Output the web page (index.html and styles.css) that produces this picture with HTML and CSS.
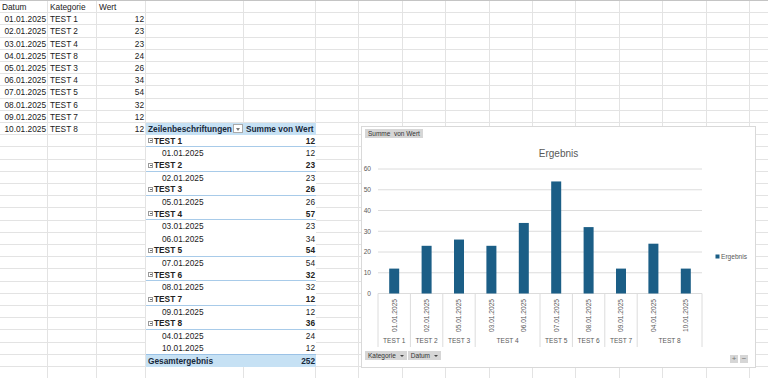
FILE: index.html
```html
<!DOCTYPE html>
<html lang="de">
<head>
  <meta charset="UTF-8" />
  <title>Mappe1</title>
  <link rel="stylesheet" href="styles.css">
</head>
<body>

  <div class="sheet">

    <!-- Rohdaten -->
    <div class="data">
      <span>Datum</span><span>Kategorie</span><span>Wert</span>
      <span class="n">01.01.2025</span><span>TEST 1</span><span class="n">12</span>
      <span class="n">02.01.2025</span><span>TEST 2</span><span class="n">23</span>
      <span class="n">03.01.2025</span><span>TEST 4</span><span class="n">23</span>
      <span class="n">04.01.2025</span><span>TEST 8</span><span class="n">24</span>
      <span class="n">05.01.2025</span><span>TEST 3</span><span class="n">26</span>
      <span class="n">06.01.2025</span><span>TEST 4</span><span class="n">34</span>
      <span class="n">07.01.2025</span><span>TEST 5</span><span class="n">54</span>
      <span class="n">08.01.2025</span><span>TEST 6</span><span class="n">32</span>
      <span class="n">09.01.2025</span><span>TEST 7</span><span class="n">12</span>
      <span class="n">10.01.2025</span><span>TEST 8</span><span class="n">12</span>
    </div>

    <!-- Pivot-Tabelle -->
    <div class="pivot">
      <div class="prow head"><span class="label">Zeilenbeschriftungen <i class="filter"></i></span><span>Summe von Wert</span></div>
      <div class="prow group"><span class="label"><i class="collapse"></i>TEST 1</span><span class="n">12</span></div>
      <div class="prow item"><span class="label">01.01.2025</span><span class="n">12</span></div>
      <div class="prow group"><span class="label"><i class="collapse"></i>TEST 2</span><span class="n">23</span></div>
      <div class="prow item"><span class="label">02.01.2025</span><span class="n">23</span></div>
      <div class="prow group"><span class="label"><i class="collapse"></i>TEST 3</span><span class="n">26</span></div>
      <div class="prow item"><span class="label">05.01.2025</span><span class="n">26</span></div>
      <div class="prow group"><span class="label"><i class="collapse"></i>TEST 4</span><span class="n">57</span></div>
      <div class="prow item"><span class="label">03.01.2025</span><span class="n">23</span></div>
      <div class="prow item"><span class="label">06.01.2025</span><span class="n">34</span></div>
      <div class="prow group"><span class="label"><i class="collapse"></i>TEST 5</span><span class="n">54</span></div>
      <div class="prow item"><span class="label">07.01.2025</span><span class="n">54</span></div>
      <div class="prow group"><span class="label"><i class="collapse"></i>TEST 6</span><span class="n">32</span></div>
      <div class="prow item"><span class="label">08.01.2025</span><span class="n">32</span></div>
      <div class="prow group"><span class="label"><i class="collapse"></i>TEST 7</span><span class="n">12</span></div>
      <div class="prow item"><span class="label">09.01.2025</span><span class="n">12</span></div>
      <div class="prow group"><span class="label"><i class="collapse"></i>TEST 8</span><span class="n">36</span></div>
      <div class="prow item"><span class="label">04.01.2025</span><span class="n">24</span></div>
      <div class="prow item"><span class="label">10.01.2025</span><span class="n">12</span></div>
      <div class="prow total"><span class="label">Gesamtergebnis</span><span class="n">252</span></div>
    </div>

    <!-- Pivot-Diagramm -->
    <div class="chart">
      <div class="chart-top">
        <span class="field">Summe &nbsp;von Wert</span>
      </div>

      <svg class="plot" width="393" height="211" viewBox="0 0 393 211">
        <text class="title" x="196.5" y="17.5" text-anchor="middle">Ergebnis</text>

        <g class="gridlines">
          <line x1="16" x2="340" y1="30" y2="30"/>
          <line x1="16" x2="340" y1="50.75" y2="50.75"/>
          <line x1="16" x2="340" y1="71.5" y2="71.5"/>
          <line x1="16" x2="340" y1="92.25" y2="92.25"/>
          <line x1="16" x2="340" y1="113" y2="113"/>
          <line x1="16" x2="340" y1="133.75" y2="133.75"/>
          <line x1="16" x2="340" y1="154.5" y2="154.5"/>
        </g>

        <g class="ylabels" text-anchor="end">
          <text x="9" y="32.3">60</text>
          <text x="9" y="53">50</text>
          <text x="9" y="73.8">40</text>
          <text x="9" y="94.5">30</text>
          <text x="9" y="115.3">20</text>
          <text x="9" y="136">10</text>
          <text x="9" y="156.8">0</text>
        </g>

        <g class="bars">
          <rect x="27.2" y="129.6" width="10" height="24.9"/>
          <rect x="59.6" y="106.8" width="10" height="47.7"/>
          <rect x="92" y="100.55" width="10" height="53.95"/>
          <rect x="124.4" y="106.8" width="10" height="47.7"/>
          <rect x="156.8" y="83.95" width="10" height="70.55"/>
          <rect x="189.2" y="42.45" width="10" height="112.05"/>
          <rect x="221.6" y="88.1" width="10" height="66.4"/>
          <rect x="254" y="129.6" width="10" height="24.9"/>
          <rect x="286.4" y="104.7" width="10" height="49.8"/>
          <rect x="318.8" y="129.6" width="10" height="24.9"/>
        </g>

        <g class="ticks">
          <line x1="16" x2="16" y1="154.5" y2="208"/>
          <line x1="48.4" x2="48.4" y1="154.5" y2="208"/>
          <line x1="80.8" x2="80.8" y1="154.5" y2="208"/>
          <line x1="113.2" x2="113.2" y1="154.5" y2="208"/>
          <line x1="178" x2="178" y1="154.5" y2="208"/>
          <line x1="210.4" x2="210.4" y1="154.5" y2="208"/>
          <line x1="242.8" x2="242.8" y1="154.5" y2="208"/>
          <line x1="275.2" x2="275.2" y1="154.5" y2="208"/>
          <line x1="340" x2="340" y1="154.5" y2="208"/>
        </g>

        <g class="xlabels" text-anchor="end">
          <text transform="translate(34.6 160) rotate(-90)">01.01.2025</text>
          <text transform="translate(67 160) rotate(-90)">02.01.2025</text>
          <text transform="translate(99.4 160) rotate(-90)">05.01.2025</text>
          <text transform="translate(131.8 160) rotate(-90)">03.01.2025</text>
          <text transform="translate(164.2 160) rotate(-90)">06.01.2025</text>
          <text transform="translate(196.6 160) rotate(-90)">07.01.2025</text>
          <text transform="translate(229 160) rotate(-90)">08.01.2025</text>
          <text transform="translate(261.4 160) rotate(-90)">09.01.2025</text>
          <text transform="translate(293.8 160) rotate(-90)">04.01.2025</text>
          <text transform="translate(326.2 160) rotate(-90)">10.01.2025</text>
        </g>

        <g class="xgroups" text-anchor="middle">
          <text x="32.2" y="203.5">TEST 1</text>
          <text x="64.6" y="203.5">TEST 2</text>
          <text x="97" y="203.5">TEST 3</text>
          <text x="145.6" y="203.5">TEST 4</text>
          <text x="194.2" y="203.5">TEST 5</text>
          <text x="226.6" y="203.5">TEST 6</text>
          <text x="259" y="203.5">TEST 7</text>
          <text x="307.6" y="203.5">TEST 8</text>
        </g>

        <rect class="key" x="353.5" y="115.5" width="4" height="4"/>
        <text class="legend" x="359" y="119.6">Ergebnis</text>
      </svg>

      <div class="chart-bottom">
        <div class="fields">
          <span class="field drop">Kategorie</span>
          <span class="field drop">Datum</span>
        </div>
        <div class="zoom">
          <span>+</span><span>&minus;</span>
        </div>
      </div>
    </div>

  </div>

</body>
</html>
```

FILE: styles.css
```css
* { box-sizing: border-box; margin: 0; padding: 0; }

body {
  font-family: "Liberation Sans", Arial, sans-serif;
  font-size: 8.3px;
  color: #1a1a1a;
  background: #fff;
  width: 768px;
  height: 378px;
  overflow: hidden;
}

/* Tabellenblatt mit Gitternetz */
.sheet {
  position: relative;
  display: grid;
  grid-template-columns: 48px 49px 49px 98px 72px repeat(11, 43.4px);
  grid-template-rows: repeat(31, 12.2px);
  border-top: 1px solid #c4c4c4;
  background-image:
    repeating-linear-gradient(to bottom, transparent 0 11.2px, #e3e3e3 11.2px 12.2px),
    linear-gradient(to right,
      transparent 0 47px, #e3e3e3 47px 48px,
      transparent 48px 96px, #e3e3e3 96px 97px,
      transparent 97px 145px, #e3e3e3 145px 146px,
      transparent 146px 243px, #e3e3e3 243px 244px,
      transparent 244px 315px, #e3e3e3 315px 316px,
      transparent 316px),
    repeating-linear-gradient(to right, transparent 0 42.4px, #e3e3e3 42.4px 43.4px);
  background-position: 0 0, 0 0, 316px 0;
  background-size: 100% 100%;
  background-repeat: no-repeat;
}

.data {
  grid-column: 1 / 4;
  grid-row: 1 / 12;
  display: grid;
  grid-template-columns: 48px 49px 49px;
  grid-auto-rows: 12.2px;
}

.data span {
  padding: 0 2px;
  line-height: 13px;
  white-space: nowrap;
}

.data .n { text-align: right; }

/* Pivot */
.pivot {
  grid-column: 4 / 6;
  grid-row: 11 / 31;
  display: grid;
  grid-auto-rows: 12.2px;
}

.prow {
  display: grid;
  grid-template-columns: 98px 72px;
  align-items: center;
  background: #fff;
  color: #222;
}

.prow span {
  padding: 0 1px 0 2px;
  white-space: nowrap;
}

.prow .n { text-align: right; }

.head, .total {
  background: #c6e1f4;
  font-weight: bold;
  color: #17283a;
}

.head .label {
  display: flex;
  align-items: center;
  justify-content: space-between;
}

.filter {
  position: relative;
  width: 10px;
  height: 9px;
  border: 1px solid #a9a9a9;
  background: #fff;
}

.filter::after {
  content: "";
  position: absolute;
  left: 2px;
  top: 2.5px;
  border-left: 2.5px solid transparent;
  border-right: 2.5px solid transparent;
  border-top: 3px solid #7a7a7a;
}

.group {
  font-weight: bold;
  border-bottom: 1px solid #a8cbe9;
}

.group .label {
  display: flex;
  align-items: center;
  gap: 1px;
}

.collapse {
  position: relative;
  width: 5px;
  height: 5px;
  border: 1px solid #9a9a9a;
}

.collapse::after {
  content: "";
  position: absolute;
  left: 0.5px;
  right: 0.5px;
  top: 1px;
  border-top: 1px solid #666;
}

.item .label { padding-left: 16px; }

.total { border-top: 1px solid #9bc2e6; }

/* Diagramm */
.chart {
  position: absolute;
  left: 361px;
  top: 125px;
  width: 395px;
  height: 242px;
  background: #fff;
  border: 1px solid #d9d9d9;
  display: flex;
  flex-direction: column;
}

.chart-top {
  height: 12px;
  padding: 2px 0 0 3px;
  display: flex;
}

.field {
  display: inline-flex;
  align-items: center;
  height: 9px;
  padding: 0 3px;
  background: #d6d6d6;
  color: #333;
  font-size: 6.5px;
  white-space: nowrap;
}

.field.drop::after {
  content: "";
  margin-left: 4px;
  border-left: 2px solid transparent;
  border-right: 2px solid transparent;
  border-top: 2.5px solid #444;
}

.plot {
  display: block;
  font-family: "Liberation Sans", Arial, sans-serif;
}

.plot text { fill: #595959; font-size: 6.6px; }
.plot .title { font-size: 10px; }
.plot .legend { font-size: 6.6px; }

.gridlines line, .ticks line {
  stroke: #dcdcdc;
  stroke-width: 1;
}

.bars rect, .key { fill: #1b5e86; }

.chart-bottom {
  flex: 1;
  display: flex;
  justify-content: space-between;
  align-items: flex-start;
  padding: 1px 7px 0 3px;
}

.fields {
  display: flex;
  gap: 1px;
}

.zoom {
  display: flex;
  gap: 2px;
  margin-top: 4px;
}

.zoom span {
  width: 8px;
  height: 8px;
  background: #d6d6d6;
  color: #777;
  font-size: 8px;
  line-height: 8px;
  text-align: center;
}
```
